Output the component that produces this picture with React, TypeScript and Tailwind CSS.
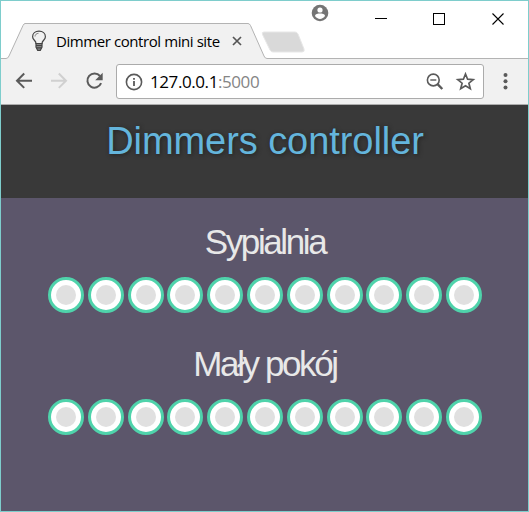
import React from "react";

const UI_FONT = "font-['Open_Sans','Noto_Sans',sans-serif]";

function TabStrip() {
  return (
    <div className="relative flex h-[58px] shrink-0">
      <svg className="absolute left-0 top-0" width="527" height="58" viewBox="1 1 527 58" fill="none">
        <path d="M0 59V58.500H6Q8 58.500 9 56L23 25.500Q24 23.500 25 23.500H248Q249.500 23.500 250.500 25.500L264 56Q265 58.500 267 58.500H529V59Z" fill="#f1f1f1" />
        <path d="M0 58.500H6Q8 58.500 9 56L23 25.500Q24 23.500 25 23.500H248Q249.500 23.500 250.500 25.500L264 56Q265 58.500 267 58.500H529" stroke="#b3b3b3" />
        <path d="M264 32H295Q297 32 298 34L304 49Q305 52 302 52H273Q271 52 270 50L262.500 34.500Q261.500 32 264 32Z" fill="#d9d9d9" stroke="#e7e7e7" />
      </svg>
      <div className="relative mt-[23px] flex h-[34px] w-[245px] items-center pl-[30px]">
        <svg width="16" height="22" viewBox="0 0 16 22" fill="none" stroke="#444" strokeWidth="1.200">
          <path d="M5 13.500C5 10.500 1.600 10 1.600 6.700C1.600 3.500 4.300 1.200 8 1.200S14.400 3.500 14.400 6.700C14.400 10 11 10.500 11 13.500Z" />
          <path d="M4 6.500C4 4.500 5.500 3.500 7.500 3.300" stroke="#777" strokeWidth="0.900" />
          <path d="M5 13.500H11V17L9.300 20.300H6.700L5 17Z" fill="#888" />
          <path d="M5 15.500H11M5.500 17.800H10.500" />
        </svg>
        <span className={"ml-[9px] w-[167px] whitespace-nowrap text-[15px] leading-5 tracking-[-0.42px] text-black " + UI_FONT}>Dimmer control mini site</span>
        <svg className="ml-[9px] shrink-0" width="10" height="10" viewBox="0 0 10 10" stroke="#555" strokeWidth="1.700">
          <path d="M1 1L9 9M9 1L1 9" />
        </svg>
      </div>
      <div className="relative ml-auto flex items-start pr-[23px]">
        <svg className="mr-[46px] mt-[3px]" width="18" height="18" viewBox="0 0 18 18">
          <circle cx="9" cy="9" r="8.300" fill="#757575" />
          <circle cx="9" cy="6" r="2.600" fill="#fff" />
          <path d="M4 12.100C4 10 7.200 9.500 9 9.500S14 10 14 12.100C12.800 14 11 14.900 9 14.900S5.200 14 4 12.100Z" fill="#fff" />
        </svg>
        <svg className="mt-[12px]" width="130" height="12" viewBox="0 0 130 12" fill="none" stroke="#000" shapeRendering="crispEdges">
          <path d="M0 5.500H12" />
          <path d="M58.500 0.500H69.500V11.500H58.500Z" />
          <path d="M117.500 0.500L128.500 11.500M128.500 0.500L117.500 11.500" shapeRendering="auto" strokeWidth="1.100" />
        </svg>
      </div>
    </div>
  );
}

function Toolbar() {
  return (
    <div className="flex h-[46px] shrink-0 items-start border-b border-[#adadad] bg-[#f1f1f1] pt-[5px]">
      <svg className="ml-[14px] mt-[8px]" width="90" height="18" viewBox="0 0 90 18" fill="none" strokeWidth="2">
        <path d="M17 8.700H2.500M9.200 1.500L2 8.700L9.200 15.900" stroke="#5a5a5a" />
        <path d="M36 8.700H50.500M43.800 1.500L51 8.700L43.800 15.900" stroke="#d0d0d0" />
        <path d="M85 4A7.100 7.100 0 1 0 86.100 11.200" stroke="#5a5a5a" />
        <path d="M87.700 0.800V8.300H80.200Z" fill="#5a5a5a" />
      </svg>
      <div className="ml-[11px] flex h-[35px] w-[368px] items-center rounded-[3px] border border-[#ababab] bg-white">
        <svg className="ml-[8px]" width="18" height="18" viewBox="0 0 18 18" fill="none" stroke="#5a5a5a" strokeWidth="1.600">
          <circle cx="9" cy="9" r="7.600" />
          <path d="M9 8V13M9 5V6.700" strokeWidth="1.800" />
        </svg>
        <span className={"ml-[7px] whitespace-nowrap text-[17px] leading-6 tracking-[-0.42px] text-black " + UI_FONT}>127.0.0.1<span className="text-[#858585]">:5000</span></span>
        <svg className="ml-auto mr-[7px]" width="50" height="20" viewBox="0 0 50 20" fill="none" stroke="#5a5a5a">
          <circle cx="7.300" cy="8" r="5.900" strokeWidth="1.600" />
          <path d="M4.300 8H10.300" strokeWidth="1.400" />
          <path d="M11.500 12.200L16.300 17" strokeWidth="2.400" />
          <path d="M39.500 2L41.600 7.200L47.200 7.600L42.900 11.200L44.300 16.700L39.500 13.700L34.700 16.700L36.100 11.200L31.800 7.600L37.400 7.200Z" strokeWidth="1.700" />
        </svg>
      </div>
      <svg className="ml-[19px] mt-[9px]" width="5" height="17" viewBox="0 0 5 17" fill="#5a5a5a">
        <circle cx="2.500" cy="2" r="2" />
        <circle cx="2.500" cy="8.300" r="2" />
        <circle cx="2.500" cy="14.500" r="2" />
      </svg>
    </div>
  );
}

function Dimmer({ name }: { name: string }) {
  return (
    <section className="flex h-[122px] flex-col items-center pl-px">
      <h2 className="mt-[24px] h-[40px] whitespace-nowrap text-[35px] leading-10 tracking-[-2.4px] text-[#e8e8e8]">{name}</h2>
      <div className="mt-[15px] flex gap-[3.8px]">
        {Array.from({ length: 11 }, (_, level) => (
          <button key={level} className="flex size-9 items-center justify-center rounded-full border-3 border-[#4fd3ab] bg-white">
            <span className="size-5 rounded-full bg-[#e0e0e0]" />
          </button>
        ))}
      </div>
    </section>
  );
}

export default function App() {
  return (
    <div className="flex h-[512px] w-[529px] flex-col overflow-hidden border border-[#7ecdcc] bg-white">
      <TabStrip />
      <Toolbar />
      <main className="flex-1 bg-[#5c566b] font-['Liberation_Sans',Arial,sans-serif]">
        <header className="flex h-[93px] justify-center bg-[#393939] pl-px pt-[14px]">
          <h1 className="h-11 whitespace-nowrap text-[38px] leading-[44px] tracking-[-0.06px] text-[#64b5dc] [text-shadow:1px_1px_4px_#222]">Dimmers controller</h1>
        </header>
        <Dimmer name="Sypialnia" />
        <Dimmer name="Mały pokój" />
      </main>
    </div>
  );
}
